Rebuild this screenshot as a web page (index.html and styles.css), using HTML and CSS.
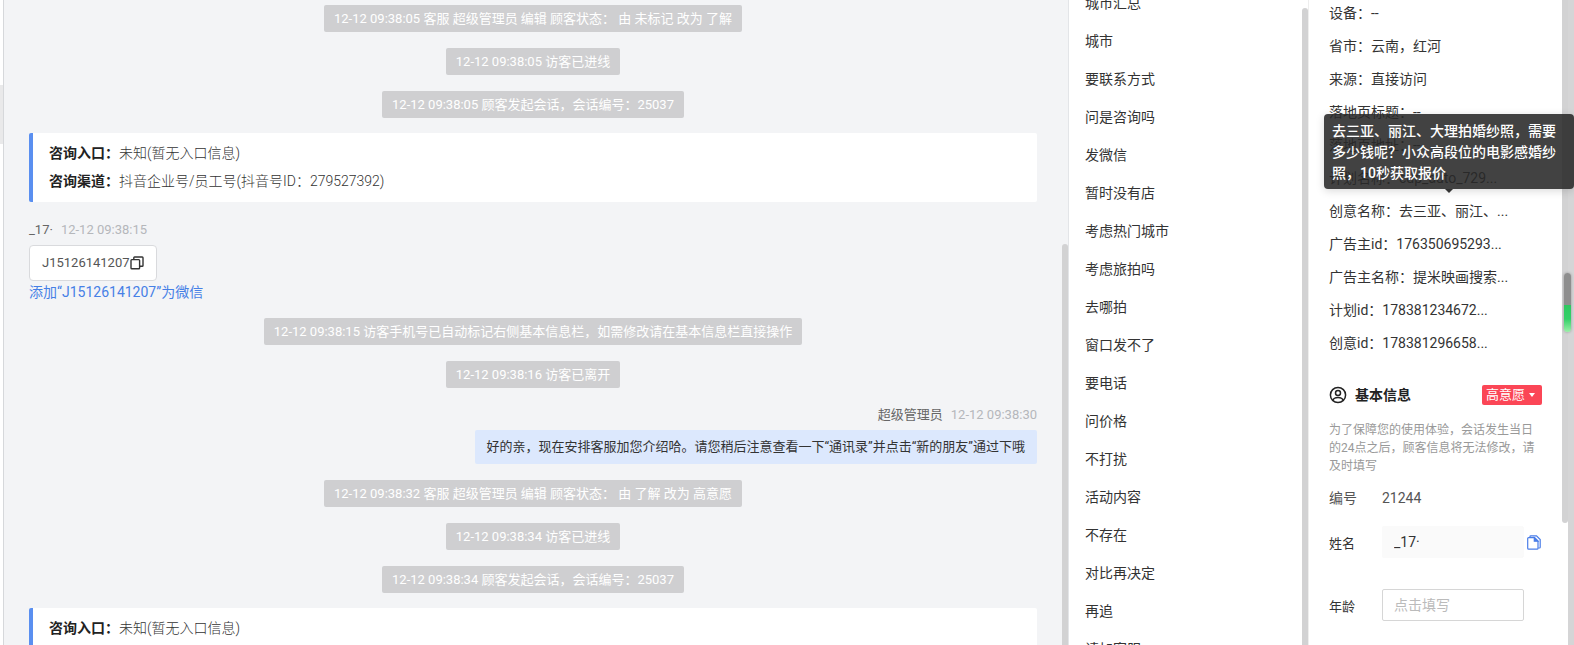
FILE: index.html
```html
<!DOCTYPE html>
<html lang="zh-CN">
<head>
    <meta charset="UTF-8">
    <meta name="viewport" content="width=device-width, initial-scale=1.0">
    <title>客服会话</title>
    <link rel="stylesheet" href="styles.css">
</head>
<body>
    <div class="app">
        <div class="side-strip">
            <div class="side-active"></div>
        </div>

        <!-- Conversation -->
        <main class="chat">
            <div class="notice">12-12 09:38:05 客服 超级管理员 编辑 顾客状态： 由 未标记 改为 了解</div>
            <div class="notice">12-12 09:38:05 访客已进线</div>
            <div class="notice">12-12 09:38:05 顾客发起会话，会话编号：25037</div>

            <div class="source-card">
                <p><strong>咨询入口：</strong>未知(暂无入口信息)</p>
                <p><strong>咨询渠道：</strong>抖音企业号/员工号(抖音号ID：279527392)</p>
            </div>

            <div class="message">
                <div class="meta"><span class="name">_17·</span><time>12-12 09:38:15</time></div>
                <div class="bubble bubble-visitor">
                    <span>J15126141207</span>
                    <button class="icon-btn" type="button" aria-label="复制">
                        <svg width="14" height="14" viewBox="0 0 14 14" fill="none" stroke="#333" stroke-width="1.4">
                            <rect x="1" y="3.6" width="8.6" height="9.2" rx="0.8"/>
                            <path d="M3.8 3.6V1.8q0-.8.8-.8h7.6q.8 0 .8.8v7.6q0 .8-.8.8H9.6"/>
                        </svg>
                    </button>
                </div>
                <a class="add-link" href="#">添加“J15126141207”为微信</a>
            </div>

            <div class="notice">12-12 09:38:15 访客手机号已自动标记右侧基本信息栏，如需修改请在基本信息栏直接操作</div>
            <div class="notice">12-12 09:38:16 访客已离开</div>

            <div class="message message-self">
                <div class="meta"><span class="name">超级管理员</span><time>12-12 09:38:30</time></div>
                <div class="bubble bubble-agent">好的亲，现在安排客服加您介绍哈。请您稍后注意查看一下“通讯录”并点击“新的朋友”通过下哦</div>
            </div>

            <div class="notice">12-12 09:38:32 客服 超级管理员 编辑 顾客状态： 由 了解 改为 高意愿</div>
            <div class="notice">12-12 09:38:34 访客已进线</div>
            <div class="notice">12-12 09:38:34 顾客发起会话，会话编号：25037</div>

            <div class="source-card">
                <p><strong>咨询入口：</strong>未知(暂无入口信息)</p>
                <p><strong>咨询渠道：</strong>抖音企业号/员工号(抖音号ID：279527392)</p>
            </div>
            <div class="scrollbar scrollbar-chat"></div>
        </main>

        <!-- Quick replies -->
        <nav class="replies">
            <ul>
                <li><a href="#">城市汇总</a></li>
                <li><a href="#">城市</a></li>
                <li><a href="#">要联系方式</a></li>
                <li><a href="#">问是咨询吗</a></li>
                <li><a href="#">发微信</a></li>
                <li><a href="#">暂时没有店</a></li>
                <li><a href="#">考虑热门城市</a></li>
                <li><a href="#">考虑旅拍吗</a></li>
                <li><a href="#">去哪拍</a></li>
                <li><a href="#">窗口发不了</a></li>
                <li><a href="#">要电话</a></li>
                <li><a href="#">问价格</a></li>
                <li><a href="#">不打扰</a></li>
                <li><a href="#">活动内容</a></li>
                <li><a href="#">不存在</a></li>
                <li><a href="#">对比再决定</a></li>
                <li><a href="#">再追</a></li>
                <li><a href="#">请加客服</a></li>
            </ul>
            <div class="scrollbar scrollbar-replies"></div>
        </nav>

        <!-- Visitor details -->
        <aside class="details">
            <ul class="detail-list">
                <li>设备：--</li>
                <li>省市：云南，红河</li>
                <li>来源：直接访问</li>
                <li>落地页标题：--</li>
                <li>落地页地址：--</li>
                <li>计划名称：cdp_auto_729...</li>
                <li class="has-tooltip">创意名称：去三亚、丽江、...
                    <div class="tooltip" role="tooltip">去三亚、丽江、大理拍婚纱照，需要多少钱呢？小众高段位的电影感婚纱照，10秒获取报价</div>
                </li>
                <li>广告主id：176350695293...</li>
                <li>广告主名称：提米映画搜索...</li>
                <li>计划id：178381234672...</li>
                <li>创意id：178381296658...</li>
            </ul>

            <div class="section-head">
                <svg width="18" height="18" viewBox="0 0 18 18" fill="none" stroke="#222" stroke-width="1.5">
                    <circle cx="9" cy="9" r="7.6"/>
                    <circle cx="9" cy="6.9" r="2.5"/>
                    <path d="M3.9 14.4c.5-2 2.3-3 5.1-3s4.6 1 5.1 3"/>
                </svg>
                <h2>基本信息</h2>
                <div class="tag">
                    <select aria-label="顾客状态">
                        <option>高意愿</option>
                    </select>
                    <span class="caret"></span>
                </div>
            </div>
            <p class="hint">为了保障您的使用体验，会话发生当日的24点之后，顾客信息将无法修改，请及时填写</p>

            <div class="field field-static">
                <span>编号</span>
                <span>21244</span>
            </div>
            <div class="field field-name">
                <label for="name">姓名</label>
                <input id="name" type="text" value="_17·" readonly>
                <button class="icon-btn" type="button" aria-label="复制姓名">
                    <svg width="14" height="15" viewBox="0 0 14 15" fill="none" stroke="#4a7de8" stroke-width="1.2">
                        <path d="M3 2.6V1.6q0-.8.8-.8h5.7L13.2 4.500v7.700q0 .8-.8.8h-1.2"/>
                        <path d="M1.6 2.6h6L11 6v7.2q0 .9-.9.9H1.6q-.9 0-.9-.9V3.5q0-.9.9-.9z"/>
                        <path d="M7.3 2.8v3.4h3.5z" fill="#4a7de8"/>
                    </svg>
                </button>
            </div>
            <div class="field">
                <label for="age">年龄</label>
                <input id="age" type="text" placeholder="点击填写">
            </div>
            <div class="scrollbar scrollbar-details"></div>
        </aside>

        <div class="page-scroll">
            <div class="meter"></div>
        </div>
    </div>
</body>
</html>
```
FILE: styles.css
```css
:root {
    --text-color: #333;
    --text-secondary: #666;
    --text-muted: #b5b7bb;
    --chat-bg: #f3f4f6;
    --notice-bg: #cfcfd1;
    --scroll-color: #d2d2d3;
    --primary-color: #5a8ff0;
    --danger-color: #fb4656;
}

* {
    box-sizing: border-box;
    margin: 0;
    padding: 0;
}

body {
    font-family: Roboto, "Noto Sans CJK SC", sans-serif;
    font-size: 14px;
    color: var(--text-color);
    background-color: #fff;
    overflow: hidden;
}

ul {
    list-style: none;
}

a {
    color: inherit;
    text-decoration: none;
}

.app {
    display: grid;
    grid-template-columns: 4px 1fr 240px 260px 6px;
    height: 100vh;
    overflow: hidden;
}

.side-strip {
    border-right: 1px solid #d6d8db;
    padding-top: 85px;
}

.side-active {
    height: 59px;
    background-color: #e9e9ea;
}

.scrollbar {
    position: absolute;
    right: 0;
    bottom: 0;
    width: 6px;
    background-color: var(--scroll-color);
    border-radius: 3px 3px 0 0;
}

.icon-btn {
    display: flex;
    border: none;
    background: none;
    cursor: pointer;
}

/* Conversation */
.chat {
    position: relative;
    display: flex;
    flex-direction: column;
    align-items: center;
    padding: 0 31px 0 25px;
    background-color: var(--chat-bg);
    overflow: hidden;
}

.chat > * {
    flex-shrink: 0;
}

.notice {
    margin: 5px 0 11px;
    padding: 0 10px;
    font-size: 13px;
    line-height: 27px;
    color: #fff;
    background-color: var(--notice-bg);
    border-radius: 2px;
}

.source-card {
    align-self: stretch;
    margin: 4px 0 12px;
    padding: 6px 16px 7px;
    line-height: 28px;
    font-weight: 300;
    background-color: #fff;
    border-left: 4px solid var(--primary-color);
    border-radius: 2px;
}

.source-card strong {
    font-weight: 700;
    color: #222;
}

.message {
    align-self: stretch;
    display: flex;
    flex-direction: column;
    align-items: flex-start;
    margin: 6px 0 10px;
}

.message-self {
    align-items: flex-end;
}

.meta {
    display: flex;
    gap: 8px;
    margin-bottom: 5px;
    font-size: 13px;
    line-height: 20px;
}

.meta .name {
    color: var(--text-secondary);
}

.meta time {
    color: var(--text-muted);
}

.bubble {
    display: flex;
    align-items: center;
    padding: 0 12px;
    font-size: 13px;
    line-height: 34px;
    border-radius: 2px;
}

.bubble-visitor {
    color: #555;
    background-color: #fff;
    border: 1px solid #d9dadd;
    border-radius: 4px;
}

.bubble-agent {
    margin-bottom: 1px;
    background-color: #dce8fd;
}

.add-link {
    line-height: 22px;
    color: #4680e6;
}

.scrollbar-chat {
    top: 244px;
}

/* Quick replies */
.replies {
    position: relative;
    border-left: 1px solid #e3e5e8;
    overflow: hidden;
}

.replies ul {
    margin-top: -16px;
}

.replies a {
    display: block;
    padding: 0 16px;
    line-height: 38px;
}

.scrollbar-replies {
    top: 8px;
}

/* Visitor details */
.details {
    position: relative;
    padding: 0 26px 0 20px;
    border-left: 1px solid #eee;
}

.detail-list {
    margin-top: -3px;
}

.detail-list li {
    line-height: 33px;
    white-space: nowrap;
}

.has-tooltip {
    position: relative;
}

.tooltip {
    position: absolute;
    z-index: 2;
    bottom: 39px;
    left: -5px;
    width: 250px;
    padding: 7px 8px 5px;
    line-height: 21px;
    font-weight: 500;
    white-space: normal;
    color: #fff;
    background-color: rgba(40, 40, 40, 0.88);
    border-radius: 4px;
    box-shadow: 0 2px 8px rgba(0, 0, 0, 0.15);
}

.tooltip::after {
    content: "";
    position: absolute;
    top: 100%;
    left: 50%;
    margin-left: -4px;
    border: 4px solid transparent;
    border-top-color: #333;
}

.section-head {
    display: flex;
    align-items: center;
    margin: 25px 0 16px;
}

.section-head h2 {
    margin-left: 8px;
    font-size: 14px;
    line-height: 20px;
    font-weight: 700;
    color: #222;
}

.tag {
    position: relative;
    margin-left: auto;
}

.tag select {
    display: block;
    width: 60px;
    height: 20px;
    padding-left: 4px;
    appearance: none;
    border: none;
    border-radius: 2px;
    font: inherit;
    font-size: 13px;
    line-height: 20px;
    color: #fff;
    background-color: var(--danger-color);
}

.caret {
    position: absolute;
    top: 8px;
    right: 7px;
    border: 3px solid transparent;
    border-top: 4px solid #fff;
    border-bottom: none;
    pointer-events: none;
}

.hint {
    margin-bottom: 12px;
    font-size: 12px;
    line-height: 18px;
    color: #999;
}

.field {
    display: grid;
    grid-template-columns: 53px 142px 1fr;
    align-items: center;
    font-size: 13px;
}

.field-static {
    margin-bottom: 17px;
    font-size: 14px;
    line-height: 22px;
    color: #555;
}

.field-name {
    margin-bottom: 31px;
}

.field input {
    width: 100%;
    height: 32px;
    padding: 0 11px;
    border: 1px solid #d6d6d6;
    border-radius: 2px;
    font: inherit;
    font-size: 14px;
    color: var(--text-color);
    outline: none;
}

.field input[readonly] {
    border-color: #fafafa;
    background-color: #fafafa;
}

.field input::placeholder {
    color: #bbb;
}

.field .icon-btn {
    margin-left: 3px;
}

.scrollbar-details {
    top: 0;
    bottom: auto;
    height: 523px;
    border-radius: 0 0 3px 3px;
}

/* Outer page scroll and level meter */
.page-scroll {
    position: relative;
    background-color: #d5d5d6;
}

.meter {
    position: absolute;
    top: 273px;
    right: 3px;
    width: 7px;
    height: 59px;
    border-radius: 4px;
    background: linear-gradient(#8e8e8e 32px, #2fc860 32px, #35d069 46px, #9af0a8);
    box-shadow: 0 0 3px rgba(0, 0, 0, 0.3);
}
```
